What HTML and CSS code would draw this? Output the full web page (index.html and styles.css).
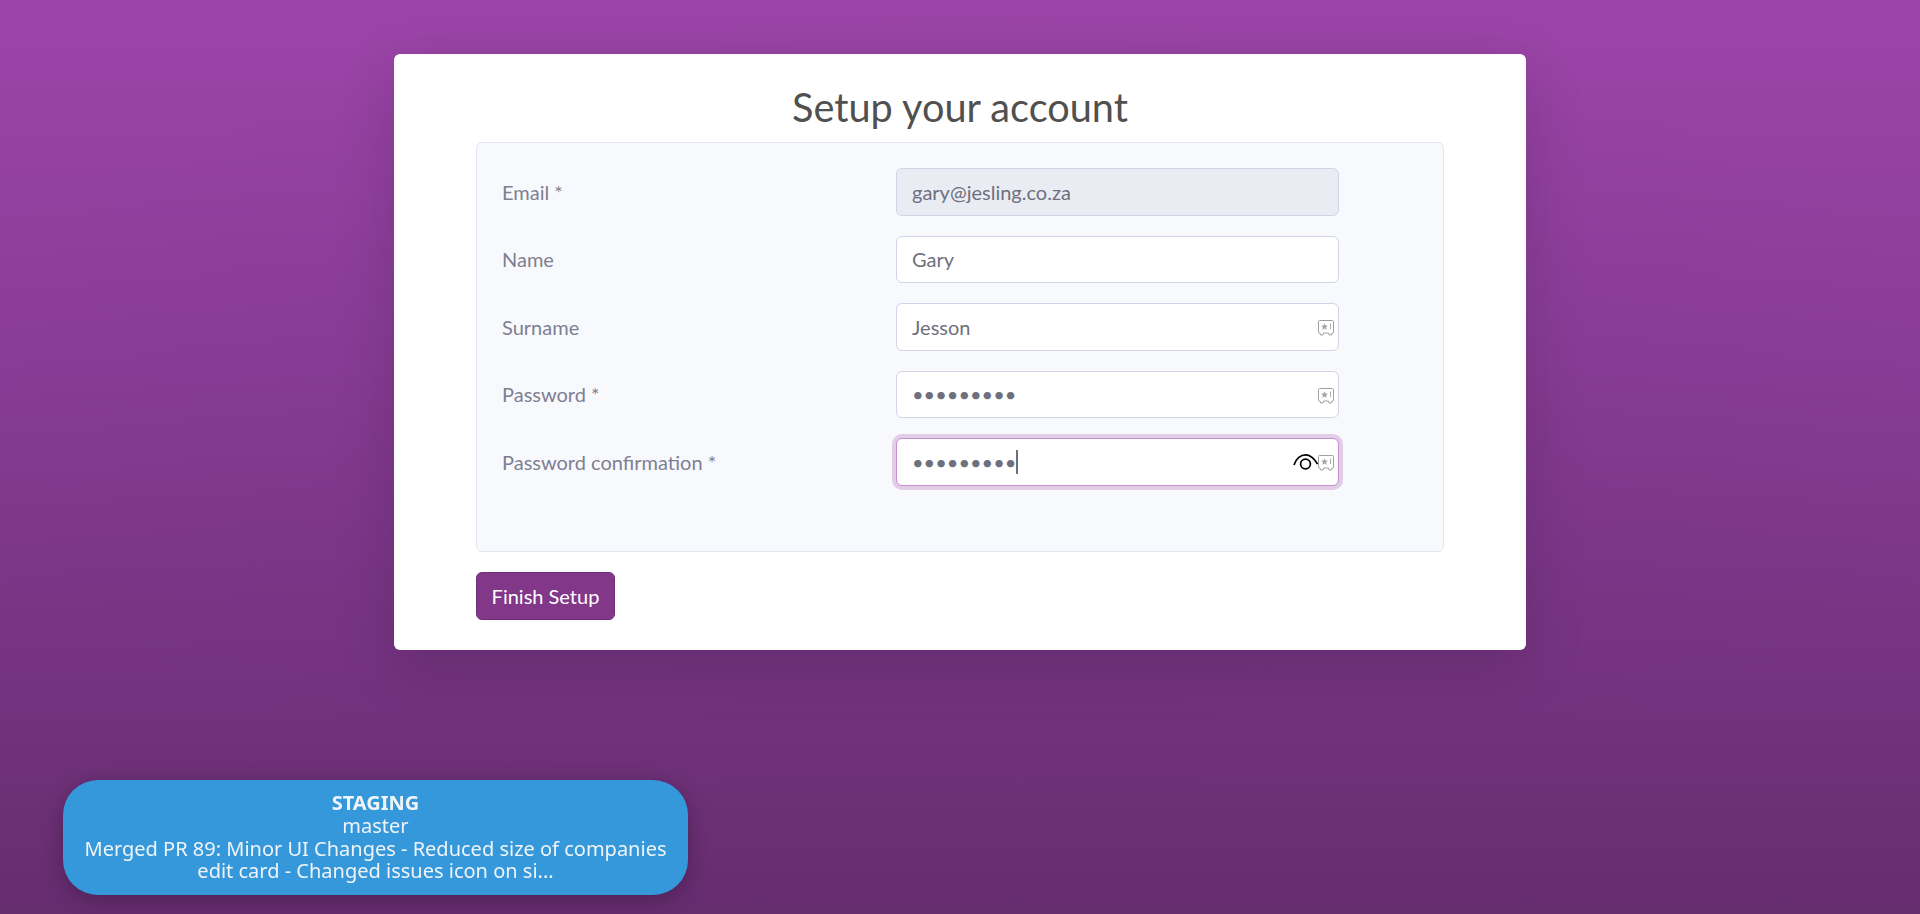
FILE: index.html
```html
<!DOCTYPE html>
<html>
	<head>
		<meta charset="UTF-8">
		<title>Setup your account</title>
		<link rel="stylesheet" href="styles.css">
	</head>
	<body>
		<!--setup card-->
		<div class="card">
			<h1 class="title">Setup your account</h1>
			<form class="setup-form">
				<div class="fields">
					<div class="row">
						<label class="label">Email *</label>
						<div class="control">
							<input class="input input-disabled" type="text" value="gary@jesling.co.za" disabled>
						</div>
					</div>
					<div class="row">
						<label class="label">Name</label>
						<div class="control">
							<input class="input" type="text" value="Gary">
						</div>
					</div>
					<div class="row">
						<label class="label">Surname</label>
						<div class="control">
							<input class="input" type="text" value="Jesson">
							<svg class="key-icon" viewBox="0 0 16 16"><path d="M1.500.5h13a1 1 0 0 1 1 1v10.500a1 1 0 0 1-1 1h-.5l-.6 2h-2.400l-.6-2H5.600l-.6 2H2.600l-.6-2h-.5a1 1 0 0 1-1-1V1.500a1 1 0 0 1 1-1z" fill="#fff" stroke="#a0a0a0" stroke-width="1"/><path d="M6.500 3.200l1 2.300 2.400.2-1.800 1.600.6 2.400-2.200-1.300-2.200 1.300.6-2.400-1.800-1.600 2.400-.2z" fill="#a6a6a6"/><path d="M12.500 3.500v5.500" stroke="#b0b0b0" stroke-width="1"/></svg>
						</div>
					</div>
					<div class="row">
						<label class="label">Password *</label>
						<div class="control">
							<input class="input" type="password" value="123456789">
							<svg class="key-icon" viewBox="0 0 16 16"><path d="M1.500.5h13a1 1 0 0 1 1 1v10.500a1 1 0 0 1-1 1h-.5l-.6 2h-2.400l-.6-2H5.600l-.6 2H2.600l-.6-2h-.5a1 1 0 0 1-1-1V1.500a1 1 0 0 1 1-1z" fill="#fff" stroke="#a0a0a0" stroke-width="1"/><path d="M6.500 3.200l1 2.300 2.400.2-1.800 1.600.6 2.400-2.200-1.300-2.200 1.300.6-2.400-1.800-1.600 2.400-.2z" fill="#a6a6a6"/><path d="M12.500 3.500v5.500" stroke="#b0b0b0" stroke-width="1"/></svg>
						</div>
					</div>
					<div class="row">
						<label class="label">Password confirmation *</label>
						<div class="control">
							<input class="input input-focus" type="password" value="123456789">
							<span class="caret"></span>
							<svg class="eye-icon" viewBox="0 0 26 18"><path d="M1 12C3 5.500 8 1.800 12.500 1.800S21 5 24.500 11" fill="none" stroke="#000" stroke-width="1.700"/><circle cx="12.500" cy="11" r="4.900" fill="none" stroke="#000" stroke-width="1.700"/></svg>
							<svg class="key-icon" viewBox="0 0 16 16"><path d="M1.500.5h13a1 1 0 0 1 1 1v10.500a1 1 0 0 1-1 1h-.5l-.6 2h-2.400l-.6-2H5.600l-.6 2H2.600l-.6-2h-.5a1 1 0 0 1-1-1V1.500a1 1 0 0 1 1-1z" fill="#fff" stroke="#a0a0a0" stroke-width="1"/><path d="M6.500 3.200l1 2.300 2.400.2-1.800 1.600.6 2.400-2.200-1.300-2.200 1.300.6-2.400-1.800-1.600 2.400-.2z" fill="#a6a6a6"/><path d="M12.500 3.500v5.500" stroke="#b0b0b0" stroke-width="1"/></svg>
						</div>
					</div>
				</div>
				<button class="btn" type="button">Finish Setup</button>
			</form>
		</div>
		<!--build info badge-->
		<div class="build-badge">
			<strong>STAGING</strong><br>
			master<br>
			Merged PR 89: Minor UI Changes - Reduced size of companies edit card - Changed issues icon on si...
		</div>
	</body>
</html>
```

FILE: styles.css
```css
html{
	height: 914px;
	overflow: hidden;
}
body{
	margin: 0;
	padding: 54px 0 0;
	height: 914px;
	box-sizing: border-box;
	overflow: hidden;
	background: radial-gradient(ellipse 1100px 400px at 50% 45%, rgba(90,40,110,.12), rgba(90,40,110,0)), linear-gradient(to bottom, #9c45a9 0%, #893c96 40%, #652c6e 100%);
	font-family: "Lato", sans-serif;
}
.card{
	width: 1132px;
	height: 596px;
	margin: 0 auto;
	padding: 29px 82px 0;
	box-sizing: border-box;
	background: #fff;
	border-radius: 6px;
	box-shadow: 0 15px 60px rgba(0,0,0,.15);
}
.title{
	margin: 0;
	font-size: 39.7px;
	font-weight: 400;
	line-height: 48px;
	text-align: center;
	color: #505050;
}
.setup-form{
	margin-top: 11px;
}
.fields{
	height: 409.5px;
	padding: 25px 25px 0;
	box-sizing: border-box;
	background: #f8f9fd;
	border: 1px solid #e3e6f0;
	border-radius: 6px;
}
.row{
	display: flex;
	align-items: center;
	height: 47.5px;
	margin-bottom: 20px;
}
.label{
	width: 394px;
	font-size: 20px;
	color: #7e7f92;
}
.control{
	position: relative;
	width: 443px;
	height: 100%;
}
.input{
	display: block;
	width: 100%;
	height: 100%;
	padding: 0 15px;
	box-sizing: border-box;
	background: #fff;
	border: 1px solid #d2d3e6;
	border-radius: 6px;
	outline: none;
	font-family: "Lato", sans-serif;
	font-size: 20px;
	color: #6e707e;
}
.input-disabled{
	background: #eaecf4;
	opacity: 1;
}
.input-focus{
	border-color: #c58fd0;
	box-shadow: 0 0 0 4px #e2cde9;
}
.caret{
	position: absolute;
	left: 120px;
	top: 12px;
	width: 2px;
	height: 24px;
	background: #6e707e;
}
.key-icon{
	position: absolute;
	right: 5px;
	top: 17px;
	width: 16px;
	height: 16px;
}
.eye-icon{
	position: absolute;
	right: 20px;
	top: 15px;
	width: 26px;
	height: 18px;
}
.btn{
	display: block;
	width: 139px;
	height: 48px;
	margin-top: 20.5px;
	padding: 0;
	background: #823788;
	border: 1px solid #6d2d78;
	border-radius: 6px;
	font-family: "Lato", sans-serif;
	font-size: 20px;
	color: #fff;
}
.build-badge{
	position: fixed;
	left: 63px;
	bottom: 19px;
	width: 625px;
	height: 115px;
	padding: 12px 20px;
	box-sizing: border-box;
	background: #3498db;
	border-radius: 35px;
	box-shadow: 0 4px 20px rgba(0,0,0,.25);
	font-family: "Noto Sans", sans-serif;
	font-size: 20px;
	line-height: 22.8px;
	text-align: center;
	color: #f0f4f8;
}
```
